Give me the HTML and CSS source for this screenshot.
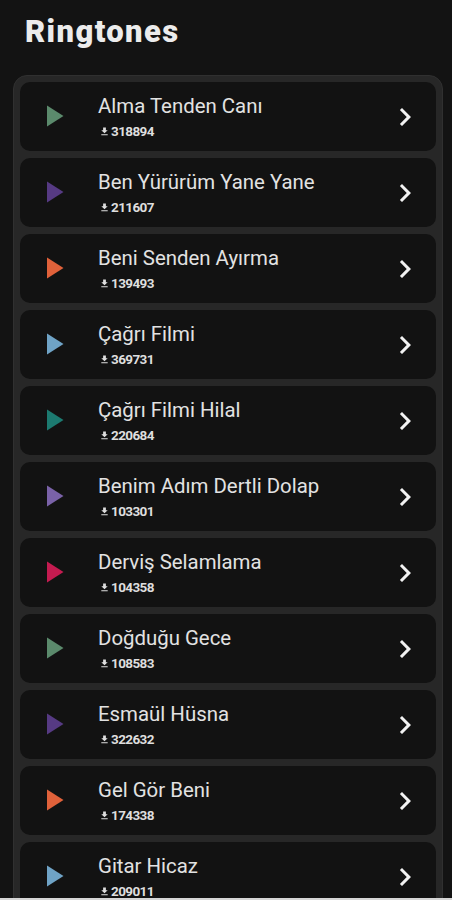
FILE: index.html
```html
<!DOCTYPE html>
<html lang="tr">
<head>
<meta charset="utf-8">
<title>Ringtones</title>
<link rel="stylesheet" href="styles.css">
</head>
<body>
<header class="header"><h1 class="title">Ringtones</h1></header>
<main class="list">
  <div class="card"><svg class="play" viewBox="0 0 24 24" style="fill:#5b8a6c"><path d="M8 5v14l11-7z"/></svg><div class="info"><div class="name">Alma Tenden Canı</div><div class="count"><svg class="dl" viewBox="0 0 24 24"><path d="M19 9h-4V3H9v6H5l7 7 7-7zM5 18v2h14v-2H5z"/></svg>318894</div></div><svg class="chev" viewBox="0 0 24 24"><path d="M10 6L8.59 7.41 13.17 12l-4.58 4.59L10 18l6-6z"/></svg></div>
  <div class="card"><svg class="play" viewBox="0 0 24 24" style="fill:#563a83"><path d="M8 5v14l11-7z"/></svg><div class="info"><div class="name">Ben Yürürüm Yane Yane</div><div class="count"><svg class="dl" viewBox="0 0 24 24"><path d="M19 9h-4V3H9v6H5l7 7 7-7zM5 18v2h14v-2H5z"/></svg>211607</div></div><svg class="chev" viewBox="0 0 24 24"><path d="M10 6L8.59 7.41 13.17 12l-4.58 4.59L10 18l6-6z"/></svg></div>
  <div class="card"><svg class="play" viewBox="0 0 24 24" style="fill:#e0613a"><path d="M8 5v14l11-7z"/></svg><div class="info"><div class="name">Beni Senden Ayırma</div><div class="count"><svg class="dl" viewBox="0 0 24 24"><path d="M19 9h-4V3H9v6H5l7 7 7-7zM5 18v2h14v-2H5z"/></svg>139493</div></div><svg class="chev" viewBox="0 0 24 24"><path d="M10 6L8.59 7.41 13.17 12l-4.58 4.59L10 18l6-6z"/></svg></div>
  <div class="card"><svg class="play" viewBox="0 0 24 24" style="fill:#6fa3c6"><path d="M8 5v14l11-7z"/></svg><div class="info"><div class="name">Çağrı Filmi</div><div class="count"><svg class="dl" viewBox="0 0 24 24"><path d="M19 9h-4V3H9v6H5l7 7 7-7zM5 18v2h14v-2H5z"/></svg>369731</div></div><svg class="chev" viewBox="0 0 24 24"><path d="M10 6L8.59 7.41 13.17 12l-4.58 4.59L10 18l6-6z"/></svg></div>
  <div class="card"><svg class="play" viewBox="0 0 24 24" style="fill:#1c7a70"><path d="M8 5v14l11-7z"/></svg><div class="info"><div class="name">Çağrı Filmi Hilal</div><div class="count"><svg class="dl" viewBox="0 0 24 24"><path d="M19 9h-4V3H9v6H5l7 7 7-7zM5 18v2h14v-2H5z"/></svg>220684</div></div><svg class="chev" viewBox="0 0 24 24"><path d="M10 6L8.59 7.41 13.17 12l-4.58 4.59L10 18l6-6z"/></svg></div>
  <div class="card"><svg class="play" viewBox="0 0 24 24" style="fill:#7a62a8"><path d="M8 5v14l11-7z"/></svg><div class="info"><div class="name">Benim Adım Dertli Dolap</div><div class="count"><svg class="dl" viewBox="0 0 24 24"><path d="M19 9h-4V3H9v6H5l7 7 7-7zM5 18v2h14v-2H5z"/></svg>103301</div></div><svg class="chev" viewBox="0 0 24 24"><path d="M10 6L8.59 7.41 13.17 12l-4.58 4.59L10 18l6-6z"/></svg></div>
  <div class="card"><svg class="play" viewBox="0 0 24 24" style="fill:#c41b50"><path d="M8 5v14l11-7z"/></svg><div class="info"><div class="name">Derviş Selamlama</div><div class="count"><svg class="dl" viewBox="0 0 24 24"><path d="M19 9h-4V3H9v6H5l7 7 7-7zM5 18v2h14v-2H5z"/></svg>104358</div></div><svg class="chev" viewBox="0 0 24 24"><path d="M10 6L8.59 7.41 13.17 12l-4.58 4.59L10 18l6-6z"/></svg></div>
  <div class="card"><svg class="play" viewBox="0 0 24 24" style="fill:#5b8a6c"><path d="M8 5v14l11-7z"/></svg><div class="info"><div class="name">Doğduğu Gece</div><div class="count"><svg class="dl" viewBox="0 0 24 24"><path d="M19 9h-4V3H9v6H5l7 7 7-7zM5 18v2h14v-2H5z"/></svg>108583</div></div><svg class="chev" viewBox="0 0 24 24"><path d="M10 6L8.59 7.41 13.17 12l-4.58 4.59L10 18l6-6z"/></svg></div>
  <div class="card"><svg class="play" viewBox="0 0 24 24" style="fill:#563a83"><path d="M8 5v14l11-7z"/></svg><div class="info"><div class="name">Esmaül Hüsna</div><div class="count"><svg class="dl" viewBox="0 0 24 24"><path d="M19 9h-4V3H9v6H5l7 7 7-7zM5 18v2h14v-2H5z"/></svg>322632</div></div><svg class="chev" viewBox="0 0 24 24"><path d="M10 6L8.59 7.41 13.17 12l-4.58 4.59L10 18l6-6z"/></svg></div>
  <div class="card"><svg class="play" viewBox="0 0 24 24" style="fill:#e0613a"><path d="M8 5v14l11-7z"/></svg><div class="info"><div class="name">Gel Gör Beni</div><div class="count"><svg class="dl" viewBox="0 0 24 24"><path d="M19 9h-4V3H9v6H5l7 7 7-7zM5 18v2h14v-2H5z"/></svg>174338</div></div><svg class="chev" viewBox="0 0 24 24"><path d="M10 6L8.59 7.41 13.17 12l-4.58 4.59L10 18l6-6z"/></svg></div>
  <div class="card"><svg class="play" viewBox="0 0 24 24" style="fill:#6fa3c6"><path d="M8 5v14l11-7z"/></svg><div class="info"><div class="name">Gitar Hicaz</div><div class="count"><svg class="dl" viewBox="0 0 24 24"><path d="M19 9h-4V3H9v6H5l7 7 7-7zM5 18v2h14v-2H5z"/></svg>209011</div></div><svg class="chev" viewBox="0 0 24 24"><path d="M10 6L8.59 7.41 13.17 12l-4.58 4.59L10 18l6-6z"/></svg></div>
</main>
<div class="bottom-edge"></div>
</body>
</html>
```
FILE: styles.css
```css
html, body {
  margin: 0;
  padding: 0;
  height: 900px;
  overflow: hidden;
  background: #131313;
  font-family: Roboto, "Liberation Sans", sans-serif;
  color: #e4e4e4;
}
.header {
  padding: 13px 25px 0;
  height: 75px;
  box-sizing: border-box;
}
.title {
  margin: 0;
  font-size: 31px;
  line-height: 38px;
  font-weight: 900;
  color: #ececec;
  letter-spacing: 1.4px;
}
.list {
  margin: 0 9px 0 13px;
  background: #272727;
  border: 1px solid #303030;
  border-radius: 14px;
  padding: 6px;
  display: flex;
  flex-direction: column;
  gap: 7px;
}
.card {
  height: 69px;
  flex: none;
  background: #121212;
  border-radius: 10px;
  display: flex;
  align-items: center;
  padding: 0 13px 0 15px;
}
.play {
  width: 36px;
  height: 36px;
  flex: none;
  margin-top: -2px;
}
.info {
  flex: 1;
  margin-left: 27px;
  display: flex;
  flex-direction: column;
  gap: 5px;
}
.name {
  font-size: 20.4px;
  line-height: 24px;
  color: #e2e2e2;
}
.count {
  display: flex;
  align-items: center;
  font-size: 13.5px;
  line-height: 16px;
  font-weight: 700;
  color: #dedede;
  letter-spacing: -0.6px;
}
.dl {
  width: 11px;
  height: 11px;
  fill: #dedede;
  margin: 0 1px 0 1px;
}
.chev {
  width: 36px;
  height: 36px;
  fill: #f2f2f2;
  flex: none;
}
.bottom-edge {
  position: fixed;
  left: 0;
  right: 0;
  bottom: 0;
  height: 2px;
  background: #d6d6d6;
}
```
